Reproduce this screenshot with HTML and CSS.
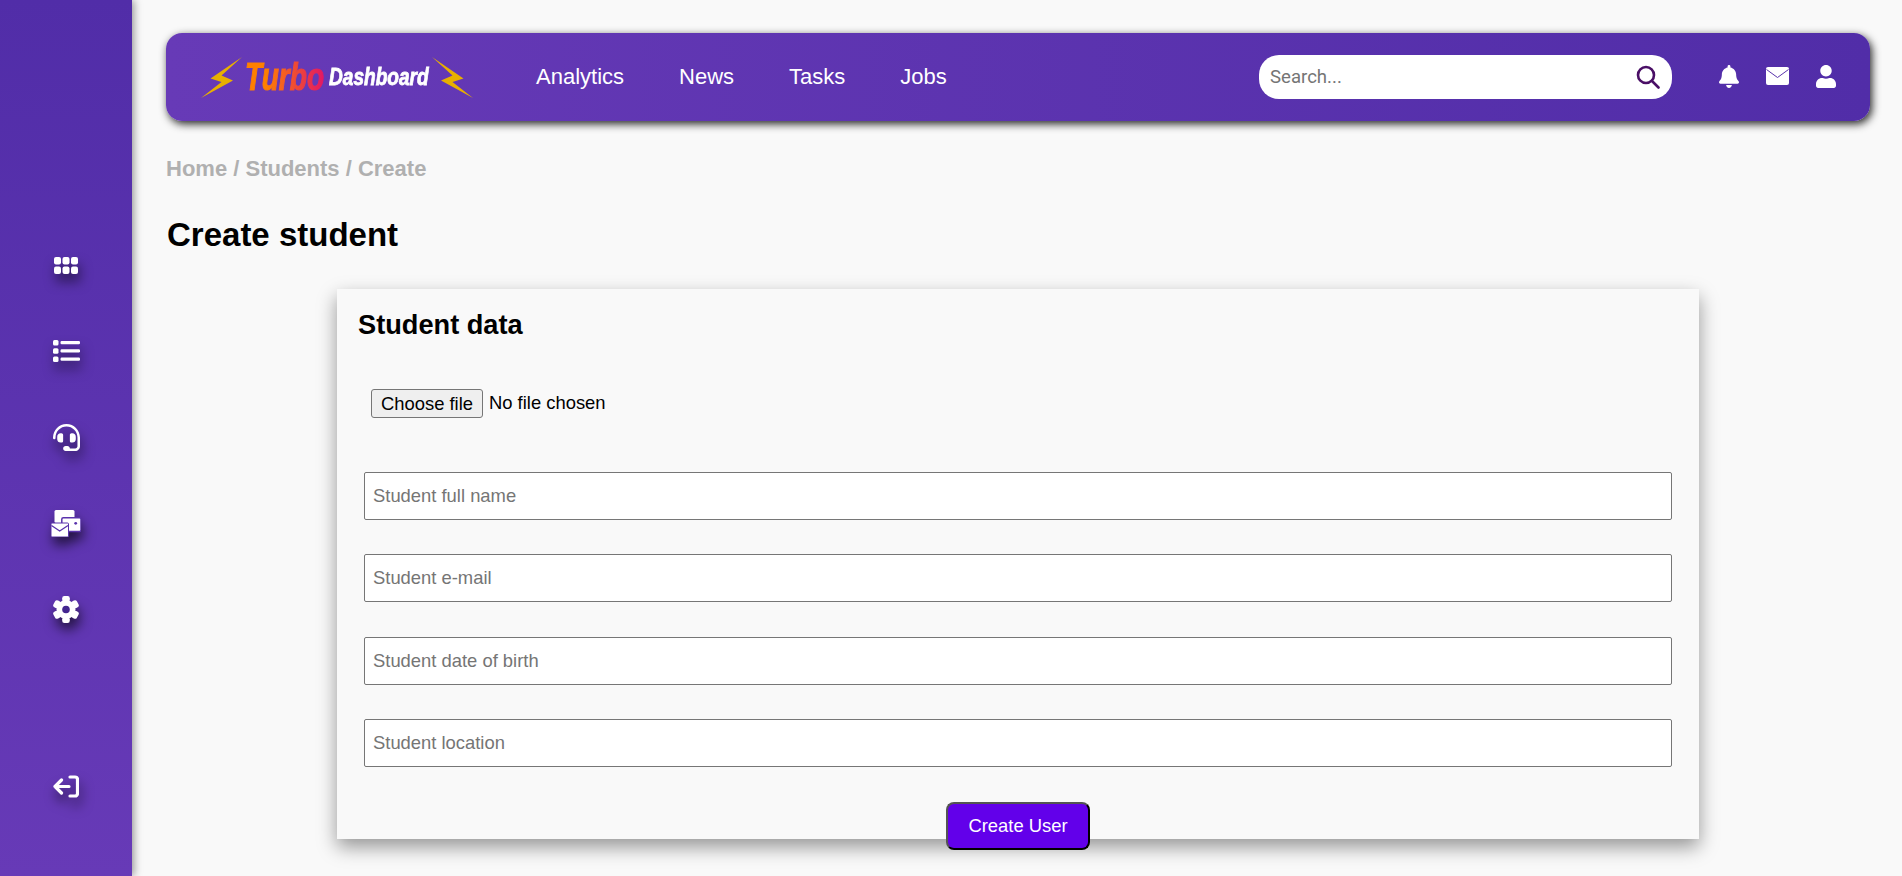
FILE: index.html
```html
<!DOCTYPE html>
<html lang="en">
<head>
  <meta charset="UTF-8">
  <meta name="viewport" content="width=device-width, initial-scale=1.0">
  <title>Turbo Dashboard</title>
  <link rel="stylesheet" href="styles.css">
</head>
<body>
  <aside class="sidebar">
    <div class="side-top">
      <a class="side-item" href="#">
        <svg class="icon-grip" viewBox="0 0 24 17"><rect x="0" y="0" width="7" height="7.5" rx="2"/><rect x="8.5" y="0" width="7" height="7.5" rx="2"/><rect x="17" y="0" width="7" height="7.5" rx="2"/><rect x="0" y="9.5" width="7" height="7.5" rx="2"/><rect x="8.5" y="9.5" width="7" height="7.5" rx="2"/><rect x="17" y="9.5" width="7" height="7.5" rx="2"/></svg>
      </a>
      <a class="side-item" href="#">
        <svg class="icon-list" viewBox="0 0 27 22"><rect x="0" y="0" width="5.5" height="5.5" rx="1.5"/><rect x="0" y="8.2" width="5.5" height="5.5" rx="1.5"/><rect x="0" y="16.5" width="5.5" height="5.5" rx="1.5"/><rect x="7.5" y="1" width="19.5" height="3.2" rx="1.2"/><rect x="7.5" y="9.3" width="19.5" height="3.2" rx="1.2"/><rect x="7.5" y="17.6" width="19.5" height="3.2" rx="1.2"/></svg>
      </a>
      <a class="side-item" href="#">
        <svg class="icon-headset" viewBox="0 0 512 512"><path d="M192 208c0-17.670-14.330-32-32-32h-16c-35.350 0-64 28.650-64 64v48c0 35.350 28.650 64 64 64h16c17.670 0 32-14.330 32-32V208zm176 144c35.350 0 64-28.650 64-64v-48c0-35.350-28.650-64-64-64h-16c-17.670 0-32 14.330-32 32v112c0 17.670 14.330 32 32 32h16zM256 0C113.180 0 4.580 118.830 0 256v16c0 8.840 7.160 16 16 16h16c8.840 0 16-7.160 16-16v-16c0-114.690 93.310-208 208-208s208 93.310 208 208h-.12c.08 2.430.12 165.720.12 165.720 0 23.350-18.930 42.280-42.280 42.280H320c0-26.510-21.490-48-48-48h-32c-26.510 0-48 21.490-48 48s21.490 48 48 48h181.720c49.860 0 90.280-40.420 90.280-90.280V256C507.420 118.830 398.820 0 256 0z"/></svg>
      </a>
      <a class="side-item" href="#">
        <svg class="icon-bulk" viewBox="0 0 30 27"><rect x="3.500" y="0" width="20" height="13" rx="1.500" fill="#fff"/><rect x="10.800" y="7.800" width="19.200" height="13.600" rx="1.500" fill="#fff" stroke="#5a33ac" stroke-width="1.500"/><circle cx="24.700" cy="13.300" r="1.400" fill="#5a33ac"/><rect x="0" y="13" width="17.500" height="14" rx="1" fill="#fff" stroke="#5a33ac" stroke-width="1"/><path d="M0.500 15.500L8.700 21L17 15.500" fill="none" stroke="#5a33ac" stroke-width="1.300"/></svg>
      </a>
      <a class="side-item" href="#">
        <svg class="icon-gear" viewBox="0 0 26 27"><g transform="translate(13 13.500)"><circle r="9.500"/><rect x="-3.800" y="-13.500" width="7.600" height="6" rx="2.200"/><rect x="-3.800" y="-13.500" width="7.600" height="6" rx="2.200" transform="rotate(60)"/><rect x="-3.800" y="-13.500" width="7.600" height="6" rx="2.200" transform="rotate(120)"/><rect x="-3.800" y="-13.500" width="7.600" height="6" rx="2.200" transform="rotate(180)"/><rect x="-3.800" y="-13.500" width="7.600" height="6" rx="2.200" transform="rotate(240)"/><rect x="-3.800" y="-13.500" width="7.600" height="6" rx="2.200" transform="rotate(300)"/><circle r="3.800" fill="#43268f"/></g></svg>
      </a>
    </div>
    <a class="side-exit" href="#">
      <svg class="icon-exit" viewBox="0 0 27 23"><path d="M18 2h5a2.500 2.500 0 0 1 2.500 2.500v14a2.500 2.500 0 0 1-2.500 2.500h-5M17 11.500H3M9.500 5L3 11.500L9.500 18" fill="none" stroke="#fff" stroke-width="3.200" stroke-linecap="round" stroke-linejoin="round"/></svg>
    </a>
  </aside>

  <main class="main">
    <header class="topbar">
      <div class="logo">
        <svg class="bolt" viewBox="0 0 41 41"><path d="M41 0L9.500 21.500L20.500 25L0 41L32 23.500L20.500 18.500Z"/></svg>
        <span class="logo-turbo">Turbo</span>
        <span class="logo-dash">Dashboard</span>
        <svg class="bolt bolt-right" viewBox="0 0 41 41"><path d="M41 0L9.500 21.500L20.500 25L0 41L32 23.500L20.500 18.500Z"/></svg>
      </div>
      <nav class="nav">
        <a href="#">Analytics</a>
        <a href="#">News</a>
        <a href="#">Tasks</a>
        <a href="#">Jobs</a>
      </nav>
      <div class="search">
        <input type="text" placeholder="Search...">
        <svg class="icon-search" viewBox="0 0 24 24"><circle cx="10" cy="10" r="8" fill="none" stroke="#4a0f66" stroke-width="2.600"/><path d="M16 16L22.500 22.500" stroke="#4a0f66" stroke-width="2.600" stroke-linecap="round"/></svg>
      </div>
      <div class="top-icons">
        <svg class="icon-bell" viewBox="0 0 448 512"><path d="M224 512c35.320 0 63.970-28.650 63.970-64H160.030c0 35.350 28.650 64 63.970 64zm215.390-149.710c-19.320-20.760-55.470-51.990-55.470-154.290 0-77.700-54.480-139.900-127.940-155.160V32c0-17.670-14.320-32-31.980-32s-31.980 14.330-31.980 32v20.840C118.560 68.100 64.080 130.300 64.080 208c0 102.300-36.150 133.530-55.470 154.290-6 6.450-8.660 14.160-8.610 21.710.11 16.400 12.980 32 32.100 32h383.800c19.120 0 32-15.600 32.100-32 .05-7.550-2.610-15.270-8.610-21.710z"/></svg>
        <svg class="icon-mail" viewBox="0 0 23 18"><rect x="0" y="0" width="23" height="18" rx="2" fill="#fff"/><path d="M0.500 2.500L11.500 10.500L22.500 2.500" fill="none" stroke="#5a33ac" stroke-width="1"/></svg>
        <svg class="icon-user" viewBox="0 0 448 512"><path d="M224 256c70.700 0 128-57.300 128-128S294.700 0 224 0 96 57.300 96 128s57.300 128 128 128zm89.600 32h-16.700c-22.200 10.200-46.900 16-72.900 16s-50.600-5.800-72.900-16h-16.700C60.200 288 0 348.200 0 422.400V464c0 26.500 21.500 48 48 48h352c26.500 0 48-21.500 48-48v-41.600c0-74.200-60.200-134.400-134.400-134.400z"/></svg>
      </div>
    </header>

    <div class="breadcrumb">Home / Students / Create</div>
    <h1>Create student</h1>

    <section class="card">
      <h2>Student data</h2>
      <form class="student-form">
        <div class="file-row">
          <button class="file-btn" type="button">Choose file</button>
          <span>No file chosen</span>
        </div>
        <input class="text-input" type="text" placeholder="Student full name">
        <input class="text-input" type="text" placeholder="Student e-mail">
        <input class="text-input" type="text" placeholder="Student date of birth">
        <input class="text-input" type="text" placeholder="Student location">
        <button class="submit-btn" type="button">Create User</button>
      </form>
    </section>
  </main>
</body>
</html>
```

FILE: styles.css
```css
* {
  box-sizing: border-box;
}
body {
  font-family: "Liberation Sans", Arial, sans-serif;
  background-color: #f9f9f9;
  display: flex;
  height: 100vh;
  margin: 0;
  overflow: hidden;
}
a {
  color: inherit;
  text-decoration: none;
}

/* sidebar */
.sidebar {
  width: 132px;
  flex-shrink: 0;
  height: 100%;
  display: flex;
  flex-direction: column;
  justify-content: space-between;
  padding: 222px 0 78px;
  background: linear-gradient(180deg, #512da8, #673ab7);
  box-shadow: 2px 0 8px rgba(0, 0, 0, 0.4);
}
.side-top {
  display: flex;
  flex-direction: column;
}
.side-item,
.side-exit {
  display: flex;
  justify-content: center;
  align-items: center;
}
.side-item {
  height: 86px;
}
.side-exit {
  padding-right: 1px;
}
.sidebar svg {
  fill: #fff;
  filter: drop-shadow(2px 8px 6px rgba(0, 0, 0, 0.6));
}
.icon-grip {
  width: 24px;
  height: 17px;
}
.icon-list {
  width: 27px;
  height: 22px;
}
.icon-headset {
  width: 27px;
  height: 27px;
}
.icon-bulk {
  width: 30px;
  height: 27px;
}
.icon-gear {
  width: 26px;
  height: 27px;
}
.icon-exit {
  width: 27px;
  height: 23px;
}

/* main */
.main {
  flex: 1;
  min-width: 0;
  padding: 33px 32px 0 34px;
}
.topbar {
  height: 88px;
  display: flex;
  align-items: center;
  padding: 0 34px 0 35px;
  border-radius: 16px;
  background: linear-gradient(90deg, #673ab7, #512da8);
  box-shadow: 2px 3px 8px rgba(0, 0, 0, 0.85);
}
.logo {
  width: 273px;
  display: flex;
  align-items: center;
  flex-shrink: 0;
}
.bolt {
  width: 41px;
  height: 41px;
  fill: #e8b000;
  flex-shrink: 0;
}
.bolt-right {
  transform: scaleX(-1);
  margin-left: 3px;
}
.logo-turbo,
.logo-dash {
  display: inline-block;
  font-weight: bold;
  font-style: italic;
  transform-origin: left center;
  white-space: nowrap;
}
.logo-turbo {
  margin: 0 -28px 0 3px;
  padding-right: 4px;
  font-size: 38px;
  transform: scaleX(0.74);
  color: transparent;
  background: linear-gradient(90deg, #ff8000, #ff8000 25%, #e0126a);
  -webkit-background-clip: text;
  background-clip: text;
  -webkit-text-stroke: 1.2px transparent;
}
.logo-dash {
  width: 100px;
  margin-left: 1px;
  font-size: 23px;
  transform: scaleX(0.83);
  color: #fff;
  -webkit-text-stroke: 0.8px #fff;
}
.nav {
  display: flex;
  gap: 55px;
  margin-left: 62px;
  color: #fff;
  font-size: 22px;
}
.search {
  margin-left: auto;
  width: 413px;
  height: 44px;
  display: flex;
  align-items: center;
  padding: 0 12px 0 11px;
  background-color: #fff;
  border-radius: 20px;
}
.search input {
  flex: 1;
  min-width: 0;
  border: none;
  outline: none;
  background: none;
  padding: 0;
  font-family: Roboto, sans-serif;
  font-size: 18.600px;
}
.icon-search {
  width: 24px;
  height: 24px;
  flex-shrink: 0;
}
.top-icons {
  display: flex;
  align-items: center;
  gap: 27px;
  margin-left: 47px;
  padding-bottom: 2px;
  fill: #fff;
}
.icon-bell,
.icon-user {
  width: 20px;
  height: 23px;
}
.icon-mail {
  width: 23px;
  height: 18px;
}

.breadcrumb {
  margin-top: 35px;
  font-size: 22px;
  font-weight: bold;
  line-height: 26px;
  color: #b0b0b0;
}
h1 {
  margin: 33px 0 0;
  padding-left: 1px;
  font-size: 33px;
  line-height: 40px;
  color: #000;
}

/* card */
.card {
  width: 1362px;
  height: 550px;
  margin: 34px auto 0;
  padding: 17px 21px 0;
  background-color: #f9f9f9;
  box-shadow: 0 8px 18px rgba(0, 0, 0, 0.4);
}
h2 {
  margin: 0;
  font-size: 27.200px;
  line-height: 38px;
  color: #000;
}
.student-form {
  display: flex;
  flex-direction: column;
  gap: 34.500px;
  margin: 0 6px;
}
.file-row {
  display: flex;
  align-items: center;
  gap: 6px;
  margin: 45px 0 19px 7px;
  font-size: 18.400px;
}
.file-btn {
  width: 112px;
  height: 29px;
  padding: 0;
  border: 1px solid #767676;
  border-radius: 3px;
  background-color: #efefef;
  color: #000;
  font-family: "Liberation Sans", Arial, sans-serif;
  font-size: 18.400px;
}
.file-row span {
  position: relative;
  top: -1px;
}
.text-input {
  width: 100%;
  height: 48px;
  padding: 0 8px;
  border: 1px solid #767676;
  border-radius: 2px;
  background-color: #fff;
  font-family: "Liberation Sans", Arial, sans-serif;
  font-size: 18.400px;
}
.submit-btn {
  align-self: center;
  width: 144px;
  height: 48px;
  background-color: #6200ea;
  color: #fff;
  border: 2px outset #000;
  border-radius: 8px;
  font-family: "Liberation Sans", Arial, sans-serif;
  font-size: 18.400px;
  cursor: pointer;
}
```
